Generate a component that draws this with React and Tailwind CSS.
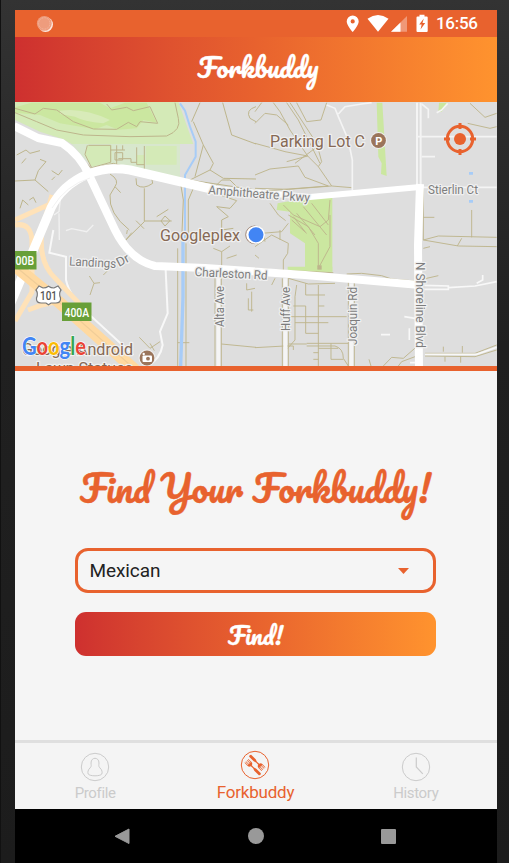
import React from "react";

const SCRIPT = "font-['Pacifico',cursive] whitespace-nowrap";

function StatusBar() {
  return (
    <div className="flex h-[27px] shrink-0 items-center bg-[#e8622e] pl-[21px] pr-[19px] text-white">
      <svg className="h-[18px] w-[18px]" viewBox="0 0 18 18">
        <circle cx="9.500" cy="9.500" r="7.500" fill="#fff" fillOpacity=".85" />
        <circle cx="8.300" cy="8.400" r="7.400" fill="#ee9c7d" />
        <circle cx="8.300" cy="8.400" r="5.700" fill="none" stroke="#f4b9a3" strokeWidth="1" strokeDasharray="1 .7" />
      </svg>
      <svg className="ml-auto h-[20px] w-[82px]" viewBox="346 13.500 82 20" fill="#fff">
        <path fillRule="evenodd" d="M352.700 15a6 6 0 0 0-6 6c0 4 6 10.500 6 10.500s6-6.500 6-10.500a6 6 0 0 0-6-6zm0 3.800a2.100 2.100 0 1 1 0 4.200 2.100 2.100 0 0 1 0-4.200z" />
        <path d="M367.500 18.200Q378 10.800 388.500 18.200L378 31.300Z" />
        <path d="M407 15.500V31.300H391Z" fillOpacity=".35" />
        <path d="M400.500 22V31.300H391Z" />
        <path d="M419.500 14.300h5v1.600h2.200q1 0 1 1v13.500q0 1-1 1h-9.200q-1 0-1-1V16.900q0-1 1-1h2z" />
        <path d="M423.800 18l-4.600 6h2.500l-1.200 5 4.700-6.600h-2.700z" fill="#e8622e" />
      </svg>
      <span className="ml-[8px] w-[42px] font-['Roboto',sans-serif] text-[17px] font-medium leading-none tracking-[-0.3px]">16:56</span>
    </div>
  );
}

function Label({ x, y, size = 12.5, width, fill = "#7d7d7d", rotate = 0, children }) {
  return (
    <text
      x={x}
      y={y}
      fontSize={size}
      textLength={width}
      lengthAdjust="spacingAndGlyphs"
      transform={`rotate(${rotate} ${x} ${y})`}
      fill={fill}
      stroke="#f0f0f0"
      strokeWidth="2.600"
      strokeLinejoin="round"
      paintOrder="stroke"
    >
      {children}
    </text>
  );
}

function StreetMap() {
  return (
    <svg className="block h-[264px] w-full shrink-0 font-['Roboto',sans-serif]" viewBox="15 102 482 264" preserveAspectRatio="none">
      <rect x="15" y="102" width="482" height="265" fill="#dedede" />
      {/* parks */}
      <g transform="translate(0 100) scale(.33333)">
        <path d="M45 5H535L580 132H215L190 118L120 95L45 60Z" fill="#d4eab7" />
        <path d="M215 132H540V236L440 215L340 192L275 200L240 160Z" fill="#d8e7cd" />
        <path d="M262 136H335V185L275 200L255 163ZM410 165H433V194H410ZM437 138H530V194H437Z" fill="#d4eab7" />
        <path d="M95 8H300L330 25L375 8H440L470 68L430 60L410 85L355 89L320 75L285 88L180 70L120 45L45 38V22Z" fill="#cbe7a0" />
        <path d="M180 32Q250 22 330 60L310 70Q250 64 225 50L180 42Z" fill="#d8ebb9" />
        <g fill="none" stroke="#bdb58c" strokeWidth="3">
          <path d="M45 25L105 42L130 25L170 30L220 65L280 87L350 88L385 67L410 80L420 65L473 70L450 20L400 32L380 22L335 30L320 12" />
          <path d="M45 38L110 65L170 90L250 105L390 110L500 108Q545 90 535 55L525 8" />
          <path d="M265 136H332V187M332 150H375M350 136V200M368 136V150M345 158H368V180H345ZM355 176H393V187H410M410 142V194H433M433 138V210M332 187L275 203M262 136L255 163L275 203" />
          <path d="M45 85L115 105L185 120L245 175L275 205L340 190L420 213L540 237" />
          <path d="M50 165L78 150L90 160L120 152M65 190L78 175M45 243L105 240L145 275M120 178L138 185L115 212L105 240M155 212L175 225L187 210M165 230L155 240M60 325L68 300L85 315M88 300L100 292L108 308" />
          <path d="M330 222Q360 240 345 260L330 285Q325 340 388 390M345 260L362 278M408 235L410 255Q430 270 458 250L455 235M433 265V365L377 420M408 362L432 386M433 363H515M483 363L495 348L510 362L495 378ZM470 350L505 328" />
          <path d="M668 8L695 105L768 132M580 65L610 135L640 190L630 210L570 240M610 135L585 230M630 210L670 235L768 237M645 260L665 240H690L710 260M575 65L600 8M540 240L550 300L545 420M580 265L565 300V420M568 240L768 270M660 285L710 302L690 325L650 320L685 350L665 360V390L700 385" />
          <path d="M768 20Q735 30 750 55L768 65" />
        </g>
        <path d="M540 10L555 32L570 80L587 125V170L555 225V420" fill="none" stroke="#a7ccf7" strokeWidth="6" />
        <g fill="none" stroke="#f1f1f1" strokeWidth="4">
          <path d="M183 280L177 335L162 345M177 340L178 420M198 392L215 386L260 395L280 375" />
        </g>
      </g>
      <g transform="translate(255 100) scale(.33333)">
        <path d="M365 8H382L395 228L378 222L380 190L370 170ZM552 8H580L560 35L550 37ZM68 310L170 292H232V515H150V430L105 400V335L65 330Z" fill="#cbe7a0" />
        <path d="M98 500H232V515H98Z" fill="#cbe7a0" />
        <g fill="none" stroke="#bdb58c" strokeWidth="2.800">
          <path d="M0 130L55 145L90 155L158 168L190 200L230 258L290 263M0 225L45 207L130 198L150 232L220 258L0 275M120 190L180 145L195 115M55 8L75 35L105 90L158 168M95 8L130 60L195 190M105 8L185 130L200 185L190 200M125 8L155 65L198 60L215 8M0 70L30 40L65 45L100 75M0 265L100 268L230 258M0 35L20 8M95 185L158 168" />
          <path d="M645 10L690 52L725 40M638 70L705 85L725 80M505 262V420L550 408L725 412M505 352H538M650 330V412M505 420L610 438L725 440M620 415L607 438" />
          <path d="M45 310L70 345L92 362M85 315L115 345L195 380L220 360L225 300M20 400L80 395L100 370M100 345L160 380L190 430V500M110 360L155 400M115 350L150 395M125 340L180 405M145 320L215 405M170 310L220 375M225 345V440L190 505M0 440L50 405L100 430L98 460L85 480V510M75 390V420M25 395L30 425" />
        </g>
        <g fill="none" stroke="#f4f4f4" strokeWidth="5">
          <path d="M215 15L240 25L250 50L280 120L292 180V270M250 42L270 20L320 12L350 8M485 110H725M500 170H540M505 262H725M500 12L520 28V55M545 38L560 30L578 10" />
          <path d="M486 8V260M497 8V260" strokeWidth="6" />
        </g>
        <path d="M642 220h12M642 304h12" stroke="#a7ccf7" strokeWidth="8" />
      </g>
      <g transform="translate(0 230) scale(.33333)" fill="none">
        <g stroke="#bdb58c" strokeWidth="2.800">
          <path d="M268 138L282 160L270 195M282 160L300 158M310 135L325 120M378 30L395 8M382 0L380 12M418 322L450 355L480 335M450 340L463 362M533 55V408M558 40V408M533 338H568M645 130V408M664 130V408M664 342L768 352M640 55L665 65L690 48M665 65V110M680 85L710 75M740 160V180L765 175M755 185V245M745 205V240H760" />
        </g>
        <path d="M160 0L148 68L198 80V150Q210 205 275 260L400 375M497 120L503 250L480 305L488 345Q480 390 440 408" stroke="#f8f8f8" strokeWidth="6" />
        <path d="M655 130V410" stroke="#f5f5f5" strokeWidth="11" />
        <path d="M549 30V200L542 408" stroke="#a7ccf7" strokeWidth="10" />
      </g>
      <g transform="translate(255 230) scale(.33333)" fill="none">
        <g stroke="#bdb58c" strokeWidth="2.800">
          <path d="M82 145V408M100 145V408M125 165L120 200V330L98 355M152 160V195H210M190 165V408M115 228H152V310H190M190 228H208M100 260H275M120 278H220M0 353L90 348H115V360M155 340H280M100 342H155M155 348H240Q265 355 265 385L280 408M190 355H250M228 340V388H265M175 368H190M175 388H190M280 155V408M298 155V408M342 388L348 408M385 408L410 382L445 385L485 350M430 408L440 395L480 380M0 115L65 120L235 128M275 132L320 130L380 137L410 147L480 153L550 137M100 145L160 162L240 160M50 165L60 145M510 370H660L725 345M510 378L660 380L725 360M565 350V365M622 348V368M570 380V395M617 378V398M505 55L525 50M0 75L12 85" />
        </g>
        <path d="M187 106h13v13h-13z" fill="#bdb58c" />
        <path d="M91 145V410M289 160V410" stroke="#f5f5f5" strokeWidth="12" />
        <path d="M510 373H665L725 352M508 166L580 168V178H508M580 173L660 168L725 155M665 160L683 150V135M378 314H405M463 295V330M448 260L480 265M465 398H480" stroke="#f8f8f8" strokeWidth="5" />
      </g>
      {/* freeway and ramps */}
      <g fill="none">
        <g stroke="#ffe2b8" strokeWidth="5">
          <path d="M52 195L42 230Q38 262 55 278L90 315" />
          <path d="M15 220L48 205M15 225Q32 222 32 243V292L15 321M28 310L42 305L60 301" />
        </g>
        <g stroke="#fff">
          <path d="M10 305L38 239L51 208Q62 185 88 174Q108 166 130 170L220 191" strokeWidth="9" strokeLinejoin="round" />
          <path d="M160 177L214 189L310 197L420 187" strokeWidth="6" />
          <path d="M14 126L38 138L62 143Q80 155 89 175L115 230Q130 260 155 266L205 268L305 275L420 285" strokeWidth="8" strokeLinejoin="round" />
          <path d="M420 184L418 245L419 370" strokeWidth="8" />
        </g>
        <path d="M10 262L60 303L135 370" stroke="#ffd9a0" strokeWidth="12" />
        <path d="M10 262L60 303L138 372" stroke="#f0cd98" strokeWidth="1.200" />
        <path d="M52 208Q66 185 90 178" stroke="#ebebeb" strokeWidth=".7" />
      </g>

      {/* street labels */}
      <Label x="208" y="194" width="102" rotate="4.500">Amphitheatre Pkwy</Label>
      <Label x="428" y="193.500" width="50">Stierlin Ct</Label>
      <Label x="69" y="265.500" width="47" rotate="3">Landings</Label>
      <Label x="119" y="267" width="13" rotate="-28">Dr</Label>
      <Label x="194.500" y="276" width="73" rotate="3">Charleston Rd</Label>
      <Label x="223.500" y="327" width="41" rotate="-90">Alta Ave</Label>
      <Label x="290" y="331" width="44" rotate="-90">Huff Ave</Label>
      <Label x="356.500" y="345" width="58" rotate="-90">Joaquin Rd</Label>
      <Label x="416" y="262" width="86" rotate="90">N Shoreline Blvd</Label>

      {/* places */}
      <Label x="270" y="147" size="17" width="95" fill="#866955">Parking Lot C</Label>
      <Label x="160" y="241" size="17" width="80" fill="#866955">Googleplex</Label>
      <Label x="22" y="355" size="17" width="111" fill="#866955">Google Android</Label>
      <Label x="36" y="374" size="17" width="97" fill="#866955">Lawn Statues</Label>
      <circle cx="378.500" cy="140.500" r="8.500" fill="#eee" />
      <circle cx="378.500" cy="140.500" r="7.400" fill="#9b755b" />
      <text x="375.200" y="144.500" fontSize="11" fontWeight="700" fill="#fff">P</text>
      <circle cx="147" cy="358" r="8.500" fill="#eee" />
      <circle cx="147" cy="358" r="7.400" fill="#9b755b" />
      <rect x="142.500" y="355.500" width="9.500" height="6.500" rx="1" fill="#fff" />
      <circle cx="148" cy="358.700" r="1.900" fill="#9b755b" />
      <circle cx="143.700" cy="354" r="1.200" fill="#fff" />
      <circle cx="254.500" cy="234.800" r="8.800" fill="#fff" stroke="#8d6c58" strokeWidth=".8" />
      <circle cx="256" cy="234.800" r="9" fill="#fff" />
      <circle cx="256" cy="234.800" r="7.500" fill="#4285f4" />

      {/* road signs */}
      <rect x="13" y="251" width="23.500" height="18.500" fill="#689f38" />
      <text x="15.500" y="264.500" fontSize="12" fontWeight="500" textLength="18.500" lengthAdjust="spacingAndGlyphs" fill="#fff">00B</text>
      <rect x="62" y="302.500" width="29.500" height="18.500" fill="#689f38" />
      <text x="64.500" y="316.500" fontSize="12" fontWeight="500" textLength="24.500" lengthAdjust="spacingAndGlyphs" fill="#fff">400A</text>
      <path d="M39 286L43 288Q46 288 48.500 286.200Q51 288 54 288L58 286L61 290Q58.500 293 60.500 298Q61 303 56 303L51 303L48.500 304.800L46 303L41 303Q36 303 36.500 298Q38.500 293 36 290Z" fill="#fff" stroke="#777" strokeWidth="1.200" />
      <text x="40" y="300" fontSize="12" fontWeight="500" textLength="17" lengthAdjust="spacingAndGlyphs" fill="#555">101</text>

      <text x="22" y="354.500" fontSize="24" fontFamily="Lato, sans-serif" fontWeight="700" textLength="64" lengthAdjust="spacingAndGlyphs" stroke="#fff" strokeWidth="1.200" paintOrder="stroke">
        <tspan fill="#4285f4">G</tspan>
        <tspan fill="#ea4335">o</tspan>
        <tspan fill="#fbbc05">o</tspan>
        <tspan fill="#4285f4">g</tspan>
        <tspan fill="#34a853">l</tspan>
        <tspan fill="#ea4335">e</tspan>
      </text>

      <g stroke="#e8622e" fill="none">
        <path d="M460 123V129M460 149V155M444 139H450M470 139H476" strokeWidth="3" />
        <circle cx="460" cy="139" r="12.700" strokeWidth="3" />
        <circle cx="460" cy="139" r="6" fill="#e8622e" stroke="none" />
      </g>
    </svg>
  );
}

function Fork() {
  return (
    <path d="M-2.700 -9V-4.500Q-2.700 -2.600 -.7 -2.100L-.6 1L-1.400 3.500V10Q0 11.500 1.400 10V3.500L.6 1L.7 -2.100Q2.700 -2.600 2.700 -4.500V-9H2V-5H1.200V-9H.5V-5H-.5V-9H-1.200V-5H-2V-9Z" />
  );
}

function Tab({ label, active, children }) {
  return (
    <div className={active ? "flex flex-1 flex-col items-center pt-[7px] text-[#e8622e]" : "flex flex-1 flex-col items-center pt-[9px] text-[#cbcbcb]"}>
      <svg className="h-[30px] w-[30px]" viewBox="-15 -15 30 30" fill="none" stroke="currentColor">
        <circle r="13.700" strokeWidth="1" />
        {children}
      </svg>
      <span className={active ? "mt-[2px] text-[17px] leading-[20px] tracking-[-0.2px]" : "mt-[2px] text-[15px] leading-[18px] tracking-[-0.35px]"}>{label}</span>
    </div>
  );
}

export default function App() {
  return (
    <div className="flex h-[863px] w-[509px] flex-col overflow-hidden border-l border-[#111] bg-linear-to-b from-[#333] via-[#202020] via-40% to-[#1c1c1c] pl-[14px] pr-[12px] pt-[10px] font-['Roboto',sans-serif]">
      <StatusBar />
      <header className="flex h-[65px] shrink-0 items-center justify-center bg-linear-to-r from-[#ce302f] via-[#e8622e] to-[#ff932e] pb-[6px] text-white">
        <svg className={"h-[44px] w-[124px] overflow-visible " + SCRIPT} viewBox="0 0 124 44">
          <text x="3.500" y="33" fontSize="25.500" textLength="121" lengthAdjust="spacingAndGlyphs" fill="#fff" stroke="#fff" strokeWidth=".3">Forkbuddy</text>
        </svg>
      </header>
      <StreetMap />
      <main className="flex h-[374px] shrink-0 flex-col items-center border-t-[5px] border-[#e8622e] bg-[#f5f5f5] pr-[2px] pt-[91px]">
        <h1 className="h-[86px] w-[352px]">
          <svg className={"h-[70px] w-[352px] overflow-visible " + SCRIPT} viewBox="0 0 352 70">
            <text x="1" y="40.500" fontSize="37" textLength="351" lengthAdjust="spacingAndGlyphs" fill="#e8622e" stroke="#e8622e" strokeWidth=".4">Find Your Forkbuddy!</text>
          </svg>
        </h1>
        <div className="flex h-[45px] w-[361px] shrink-0 items-center justify-between rounded-[13px] border-[3px] border-[#e8622e] pl-[12px] pr-[24px] text-[19px] tracking-[-0.1px] text-[#222]">
          <span className="pt-[2px]">Mexican</span>
          <svg className="h-[6px] w-[11px]" viewBox="0 0 11 6"><path d="M0 0H11L5.500 6Z" fill="#e8622e" /></svg>
        </div>
        <button className="mt-[19px] flex h-[44px] w-[361px] shrink-0 items-center justify-center rounded-[11px] bg-linear-to-r from-[#ce302f] via-[#e8622e] to-[#ff932e]">
          <svg className={"h-[44px] w-[56px] overflow-visible " + SCRIPT} viewBox="0 0 56 44">
            <text x="1" y="32.500" fontSize="23" textLength="55" lengthAdjust="spacingAndGlyphs" fill="#fff" stroke="#fff" strokeWidth=".3">Find!</text>
          </svg>
        </button>
      </main>
      <nav className="flex h-[69px] shrink-0 border-t-[3px] border-[#dfdfdf] bg-[#f4f4f4] pr-[1px]">
        <Tab label="Profile">
          <path d="M-4 -4C-4 -10.300 4 -10.300 4 -4C4 -2 3.200 -1 4.800 .8C7.200 2.800 7.500 5.500 6.800 7C5.500 9.400 -5.500 9.400 -6.800 7C-7.500 5.500 -7.200 2.800 -4.800 .8C-3.200 -1 -4 -2 -4 -4Z" />
        </Tab>
        <Tab label="Forkbuddy" active>
          <g fill="currentColor" stroke="none">
            <g transform="translate(-2.200 2.200) rotate(-45)"><Fork /></g>
            <g transform="translate(2.200 -2.200) rotate(135)"><Fork /></g>
          </g>
        </Tab>
        <Tab label="History">
          <path d="M.3 -9.500V0L6.800 6.800" strokeWidth="1.200" />
        </Tab>
      </nav>
      <footer className="flex flex-1 items-center justify-between bg-black pl-[99px] pr-[101px]">
        <svg className="h-[16px] w-[16px]" viewBox="0 0 16 16"><path d="M15 1V15.500L1 8.300Z" fill="#999" stroke="#999" strokeLinejoin="round" /></svg>
        <span className="h-[16px] w-[16px] rounded-full bg-[#999]" />
        <span className="h-[15px] w-[15px] rounded-[1px] bg-[#999]" />
      </footer>
    </div>
  );
}
